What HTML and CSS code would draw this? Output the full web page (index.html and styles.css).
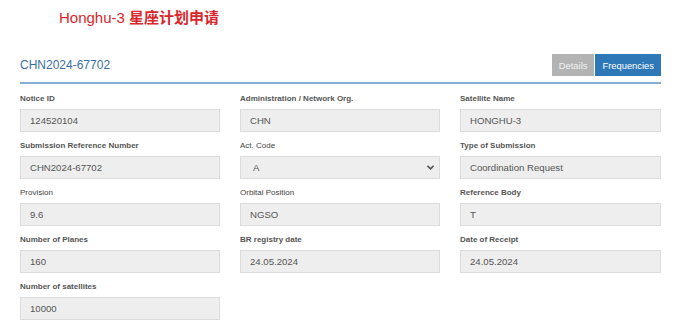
FILE: index.html
```html
<!DOCTYPE html>
<html lang="zh-CN">
<head>
  <meta charset="UTF-8" />
  <meta name="viewport" content="width=device-width, initial-scale=1.0" />
  <title>Honghu-3 星座计划申请</title>
  <link rel="stylesheet" href="styles.css">
</head>
<body>
  <div class="page">
    <h1 class="title">Honghu-3 <span class="title-cn">星座计划申请</span></h1>

    <div class="notice-head">
      <h2>CHN2024-67702</h2>
      <div class="tabs">
        <button class="tab">Details</button>
        <button class="tab active">Frequencies</button>
      </div>
    </div>

    <div class="fields">
      <div class="field">
        <label>Notice ID</label>
        <div class="value">124520104</div>
      </div>
      <div class="field">
        <label>Administration / Network Org.</label>
        <div class="value">CHN</div>
      </div>
      <div class="field">
        <label>Satellite Name</label>
        <div class="value">HONGHU-3</div>
      </div>

      <div class="field">
        <label>Submission Reference Number</label>
        <div class="value">CHN2024-67702</div>
      </div>
      <div class="field">
        <label class="plain">Act. Code</label>
        <div class="value select">
          <span>A</span>
          <svg width="7" height="5" viewBox="0 0 7 5"><path d="M0.5 0.8 L3.5 3.8 L6.5 0.8" fill="none" stroke="#555" stroke-width="1.6"/></svg>
        </div>
      </div>
      <div class="field">
        <label>Type of Submission</label>
        <div class="value">Coordination Request</div>
      </div>

      <div class="field">
        <label class="plain">Provision</label>
        <div class="value">9.6</div>
      </div>
      <div class="field">
        <label class="plain">Orbital Position</label>
        <div class="value">NGSO</div>
      </div>
      <div class="field">
        <label>Reference Body</label>
        <div class="value">T</div>
      </div>

      <div class="field">
        <label>Number of Planes</label>
        <div class="value">160</div>
      </div>
      <div class="field">
        <label>BR registry date</label>
        <div class="value">24.05.2024</div>
      </div>
      <div class="field">
        <label>Date of Receipt</label>
        <div class="value">24.05.2024</div>
      </div>

      <div class="field">
        <label>Number of satellites</label>
        <div class="value">10000</div>
      </div>
    </div>
  </div>
</body>
</html>
```

FILE: styles.css
```css
body {
  margin: 0;
  font-family: "Liberation Sans", Arial, "Noto Sans CJK SC", sans-serif;
  background: #fff;
  color: #555;
}
.page {
  width: 641px;
  padding: 0 0 0 20px;
}
.title {
  margin: 8px 0 0 39px;
  font-size: 15px;
  font-weight: normal;
  line-height: 20px;
  color: #d8262c;
}
.title-cn {
  font-weight: bold;
}
.notice-head {
  display: flex;
  justify-content: space-between;
  align-items: center;
  margin-top: 26px;
  padding-bottom: 6px;
  border-bottom: 2px solid #86acd8;
}
.notice-head h2 {
  margin: 0;
  font-size: 12px;
  font-weight: normal;
  color: #3b6e9e;
}
.tabs {
  display: flex;
  gap: 1px;
}
.tab {
  height: 22px;
  padding: 0 7px;
  border: none;
  font-family: inherit;
  font-size: 9.4px;
  color: #f2f2f2;
  background: #b3b3b3;
}
.tab.active {
  background: #2f78b8;
  color: #fff;
}
.fields {
  display: grid;
  grid-template-columns: 200px 200px 201px;
  column-gap: 20px;
  row-gap: 9px;
  margin-top: 10px;
}
.field label {
  display: block;
  height: 10px;
  margin-bottom: 5px;
  font-size: 8px;
  line-height: 10px;
  font-weight: bold;
  color: #555;
}
.field label.plain {
  font-weight: normal;
  color: #444;
}
.value {
  box-sizing: border-box;
  height: 23px;
  padding: 0 9px;
  line-height: 21px;
  font-size: 9.6px;
  color: #555;
  background: #eeeeee;
  border: 1px solid #dcdcdc;
}
.value.select {
  display: flex;
  justify-content: space-between;
  align-items: center;
  padding: 0 5px 0 12px;
}
```
